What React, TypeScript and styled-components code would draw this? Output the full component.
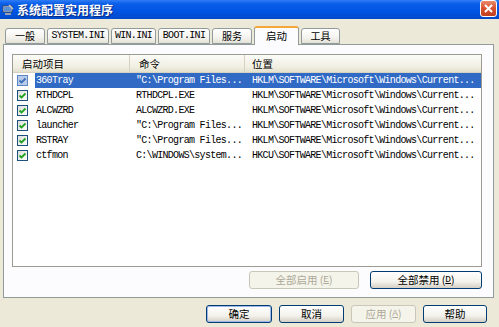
import { createGlobalStyle, styled } from "styled-components";

const Global = createGlobalStyle`
	html, body {
		margin: 0;
		padding: 0;
		background: #ece9d8;
	}
	body {
		width: 499px;
		height: 327px;
		overflow: hidden;
		font-family: "Noto Sans CJK SC", "Liberation Sans", sans-serif;
	}
`;

const Window = styled.div`
	display: flex;
	flex-direction: column;
	width: 499px;
	height: 327px;
	background: #ece9d8;
`;

const TitleBar = styled.div`
	display: flex;
	align-items: center;
	height: 19px;
	padding-left: 2px;
	gap: 3px;
	background: linear-gradient(180deg, #2e7cf6 0%, #0a5ee8 20%, #0054e3 60%, #0049c9 100%);
`;

const TitleText = styled.span`
	flex: 1;
	color: #fff;
	font-size: 12px;
	font-weight: 700;
	line-height: 19px;
	text-shadow: 1px 1px 0 #0a2a80;
`;

const CloseBtn = styled.div`
	width: 17px;
	height: 17px;
	margin: -2px 2px 0 0;
	border: 1px solid #fff;
	border-radius: 3px;
	box-sizing: border-box;
	background: linear-gradient(180deg, #e88a6c 0%, #d8512e 50%, #c1401f 100%);
	display: flex;
	align-items: center;
	justify-content: center;
`;

const Body = styled.div`
	display: flex;
	flex-direction: column;
	padding: 6px 5px 0 3px;
`;

const TabRow = styled.div`
	display: flex;
	align-items: flex-end;
	height: 19px;
	padding-left: 2px;
	gap: 2px;
`;

const Tab = styled.div<{ $active?: boolean; $w: number }>`
	width: ${(p) => p.$w}px;
	height: ${(p) => (p.$active ? 19 : 16)}px;
	box-sizing: border-box;
	border: 1px solid #919b9c;
	border-bottom: ${(p) => (p.$active ? "none" : "1px solid #919b9c")};
	border-top: ${(p) => (p.$active ? "2px solid #f5a73c" : "1px solid #919b9c")};
	border-radius: 3px 3px 0 0;
	background: ${(p) => (p.$active ? "#fcfcfe" : "linear-gradient(180deg, #ffffff 0%, #f4f3ee 60%, #e4e2d6 100%)")};
	margin-bottom: ${(p) => (p.$active ? -1 : 0)}px;
	position: relative;
	z-index: ${(p) => (p.$active ? 2 : 1)};
	display: flex;
	align-items: center;
	justify-content: center;
	font-size: ${(p) => (p.$active ? 10.5 : 10)}px;
	color: #000;
	line-height: 1;
`;

const Mono = styled.span`
	font-family: "Liberation Mono", "DejaVu Sans Mono", monospace;
	font-size: 10px;
	letter-spacing: -0.7px;
`;

const Panel = styled.div`
	height: 254px;
	box-sizing: border-box;
	border: 1px solid #919b9c;
	background: #fcfcfe;
	padding: 9px 11px 0 8px;
	display: flex;
	flex-direction: column;
`;

const List = styled.div`
	height: 213px;
	box-sizing: border-box;
	border: 1px solid #9c9b91;
	background: #fff;
	display: flex;
	flex-direction: column;
`;

const Header = styled.div`
	display: grid;
	grid-template-columns: 117px 115px 1fr;
	height: 17px;
	background: linear-gradient(180deg, #fbfbf8 0%, #f1efe2 70%, #e3e0ce 100%);
	border-bottom: 1px solid #d6d2c2;
`;

const HeaderCell = styled.div`
	display: flex;
	align-items: center;
	padding-left: 9px;
	font-size: 10.5px;
	color: #000;
	border-right: 1px solid #d6d2c2;
	&:last-child {
		border-right: none;
		padding-left: 7px;
	}
`;

const Row = styled.div<{ $sel?: boolean }>`
	display: grid;
	grid-template-columns: 22px 95px 115px 1fr;
	height: 15px;
	align-items: center;
	& > *:not(:first-child) {
		background: ${(p) => (p.$sel ? "#316ac5" : "transparent")};
		color: ${(p) => (p.$sel ? "#fff" : "#000")};
		height: 15px;
		display: flex;
		align-items: center;
		white-space: nowrap;
		overflow: hidden;
	}
`;

const CheckCell = styled.div`
	display: flex;
	align-items: center;
	padding-left: 4px;
`;

const Check = styled.div<{ $sel?: boolean }>`
	width: 11px;
	height: 11px;
	box-sizing: border-box;
	border: 1px solid ${(p) => (p.$sel ? "#5a86c2" : "#1c5180")};
	background: ${(p) => (p.$sel ? "#b8cbe8" : "linear-gradient(135deg, #dcdcd7 0%, #ffffff 100%)")};
	display: flex;
	align-items: center;
	justify-content: center;
`;

const TextCell = styled.div<{ $pad: number }>`
	padding-left: ${(p) => p.$pad}px;
`;

const ActionRow = styled.div`
	display: flex;
	justify-content: flex-end;
	gap: 11px;
	margin-top: 4px;
`;

const Button = styled.div<{ $w: number; $disabled?: boolean; $default?: boolean }>`
	width: ${(p) => p.$w}px;
	height: 18px;
	box-sizing: border-box;
	border: 1px solid ${(p) => (p.$disabled ? "#c9c7ba" : "#003c74")};
	border-radius: 3px;
	background: ${(p) => (p.$disabled ? "#f5f4ea" : "linear-gradient(180deg, #ffffff 0%, #f3f2ec 60%, #d6d0c5 100%)")};
	box-shadow: ${(p) => (p.$default ? "inset 0 0 0 1px #9cb7e8" : "none")};
	display: flex;
	align-items: center;
	justify-content: center;
	font-size: 10.5px;
	color: ${(p) => (p.$disabled ? "#aca899" : "#000")};
	line-height: 1;
`;

const Footer = styled.div`
	display: flex;
	justify-content: flex-end;
	gap: 7px;
	padding: 7px 7px 0 0;
`;

const Key = styled.span`
	text-decoration: underline;
	font-family: "Liberation Mono", monospace;
	font-size: 9.5px;
`;

const rows = [
	{ name: "360Tray", cmd: "\"C:\\Program Files...", loc: "HKLM\\SOFTWARE\\Microsoft\\Windows\\Current..." },
	{ name: "RTHDCPL", cmd: "RTHDCPL.EXE", loc: "HKLM\\SOFTWARE\\Microsoft\\Windows\\Current..." },
	{ name: "ALCWZRD", cmd: "ALCWZRD.EXE", loc: "HKLM\\SOFTWARE\\Microsoft\\Windows\\Current..." },
	{ name: "launcher", cmd: "\"C:\\Program Files...", loc: "HKLM\\SOFTWARE\\Microsoft\\Windows\\Current..." },
	{ name: "RSTRAY", cmd: "\"C:\\Program Files...", loc: "HKLM\\SOFTWARE\\Microsoft\\Windows\\Current..." },
	{ name: "ctfmon", cmd: "C:\\WINDOWS\\system...", loc: "HKCU\\SOFTWARE\\Microsoft\\Windows\\Current..." },
];

function AppIcon() {
	return (
		<svg width="12" height="12" viewBox="0 0 12 12">
			<rect x="1" y="2" width="9" height="6" fill="#dfe6f0" stroke="#3a4a6a" strokeWidth="1" />
			<rect x="2" y="3" width="7" height="4" fill="#5b8fd8" />
			<rect x="3" y="9" width="6" height="2" fill="#9aa3b0" />
			<path d="M7 1 L11 5" stroke="#c8c8c8" strokeWidth="1.5" />
		</svg>
	);
}

function Tick({ color }: { color: string }) {
	return (
		<svg width="9" height="9" viewBox="0 0 9 9">
			<path d="M1.5 4.5 L3.5 6.5 L7.5 2.5" stroke={color} strokeWidth="1.8" fill="none" />
		</svg>
	);
}

export default function App() {
	return (
		<Window>
			<Global />
			<TitleBar>
				<AppIcon />
				<TitleText>系统配置实用程序</TitleText>
				<CloseBtn>
					<svg width="9" height="9" viewBox="0 0 9 9">
						<path d="M1 1 L8 8 M8 1 L1 8" stroke="#fff" strokeWidth="2" />
					</svg>
				</CloseBtn>
			</TitleBar>
			<Body>
				<TabRow>
					<Tab $w={40}>一般</Tab>
					<Tab $w={62}><Mono>SYSTEM.INI</Mono></Tab>
					<Tab $w={45}><Mono>WIN.INI</Mono></Tab>
					<Tab $w={52}><Mono>BOOT.INI</Mono></Tab>
					<Tab $w={40}>服务</Tab>
					<Tab $w={45} $active>启动</Tab>
					<Tab $w={39}>工具</Tab>
				</TabRow>
				<Panel>
					<List>
						<Header>
							<HeaderCell>启动项目</HeaderCell>
							<HeaderCell>命令</HeaderCell>
							<HeaderCell>位置</HeaderCell>
						</Header>
						{rows.map((r, i) => (
							<Row key={r.name} $sel={i === 0}>
								<CheckCell>
									<Check $sel={i === 0}>
										<Tick color={i === 0 ? "#3a70b8" : "#21a121"} />
									</Check>
								</CheckCell>
								<TextCell $pad={1}><Mono>{r.name}</Mono></TextCell>
								<TextCell $pad={6}><Mono>{r.cmd}</Mono></TextCell>
								<TextCell $pad={7}><Mono>{r.loc}</Mono></TextCell>
							</Row>
						))}
					</List>
					<ActionRow>
						<Button $w={110} $disabled>全部启用 (<Key>E</Key>)</Button>
						<Button $w={112}>全部禁用 (<Key>D</Key>)</Button>
					</ActionRow>
				</Panel>
				<Footer>
					<Button $w={66} $default>确定</Button>
					<Button $w={65}>取消</Button>
					<Button $w={65} $disabled>应用 (<Key>A</Key>)</Button>
					<Button $w={64}>帮助</Button>
				</Footer>
			</Body>
		</Window>
	);
}
